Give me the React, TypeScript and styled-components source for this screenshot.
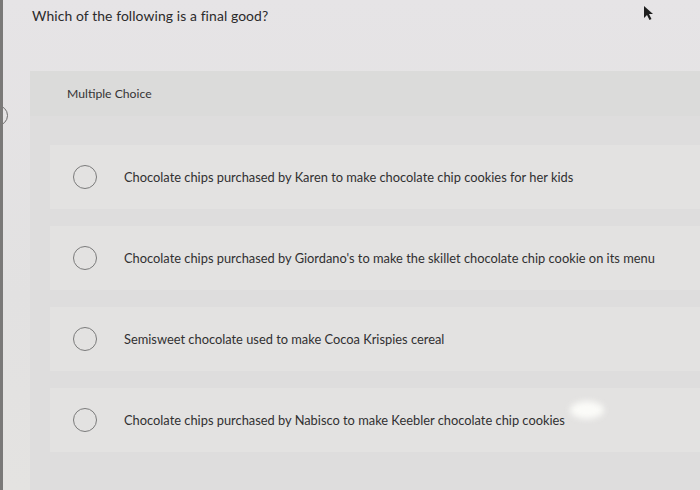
import React from 'react';
import styled, { createGlobalStyle } from 'styled-components';

const GlobalStyle = createGlobalStyle`
	html, body {
		margin: 0;
		padding: 0;
		background: #e5e3e4;
	}
	body {
		font-family: Lato, "Open Sans", sans-serif;
	}
`

type optionType = {
	id: number;
	label: string;
}

const options: Array<optionType> = [
	{ id: 1, label: 'Chocolate chips purchased by Karen to make chocolate chip cookies for her kids' },
	{ id: 2, label: "Chocolate chips purchased by Giordano's to make the skillet chocolate chip cookie on its menu" },
	{ id: 3, label: 'Semisweet chocolate used to make Cocoa Krispies cereal' },
	{ id: 4, label: 'Chocolate chips purchased by Nabisco to make Keebler chocolate chip cookies' },
]

const Cursor = () => (
	<StyledCursor width="12" height="16" viewBox="0 0 12 16">
		<path d="M1 1 L1 13 L4 10 L6.5 15 L8.5 14 L6 9 L10 9 Z" fill="#1e1e1e" />
	</StyledCursor>
)

export default function App() {
	return (
		<StyledPage>
			<GlobalStyle />
			<StyledEdgeCircle />
			<Cursor />
			<StyledGlare />
			<StyledQuestion>Which of the following is a final good?</StyledQuestion>
			<StyledPanel>
				<StyledHeader>Multiple Choice</StyledHeader>
				<StyledList>
					{options.map((item) => (
						<StyledOption key={item.id}>
							<StyledRadio />
							<StyledLabel>{item.label}</StyledLabel>
						</StyledOption>
					))}
				</StyledList>
			</StyledPanel>
		</StyledPage>
	)
}

const StyledPage = styled.div`
	position: relative;
	width: 700px;
	height: 490px;
	overflow: hidden;
	box-sizing: border-box;
	border-left: 3px solid #7a7978;
	background: linear-gradient(180deg, #e6e4e6 0%, #e2e1e1 60%, #e4e3e1 100%);
	padding-top: 5px;
`

const StyledQuestion = styled.h1`
	margin: 0 0 0 29px;
	font-size: 13.9px;
	font-weight: 400;
	line-height: 22px;
	color: #2b2a2b;
	letter-spacing: 0.1px;
`

const StyledPanel = styled.section`
	margin: 44px 0 0 27px;
	background: #dedddd;
	height: 500px;
`

const StyledHeader = styled.div`
	height: 45px;
	box-sizing: border-box;
	padding: 15px 0 0 37px;
	font-size: 12.2px;
	color: #353435;
	background: #dbdbda;
`

const StyledList = styled.div`
	display: flex;
	flex-direction: column;
	gap: 17px;
	padding: 29px 0 0 20px;
`

const StyledOption = styled.div`
	display: flex;
	align-items: center;
	height: 64px;
	background: #e3e2e1;
	padding-left: 23px;
`

const StyledRadio = styled.span`
	width: 22px;
	height: 22px;
	border-radius: 50%;
	border: 1.5px solid #7b7b7b;
	background: transparent;
	flex-shrink: 0;
`

const StyledLabel = styled.span`
	margin-left: 27px;
	font-size: 12.85px;
	color: #313031;
	white-space: nowrap;
`

const StyledEdgeCircle = styled.span`
	position: absolute;
	left: -16px;
	top: 105px;
	width: 19px;
	height: 19px;
	border-radius: 50%;
	border: 1.5px solid #6d6c6c;
`

const StyledCursor = styled.svg`
	position: absolute;
	left: 640px;
	top: 5px;
`

const StyledGlare = styled.span`
	position: absolute;
	left: 567px;
	top: 401px;
	width: 34px;
	height: 18px;
	border-radius: 50%;
	background: #fbfbf8;
	filter: blur(3px);
`
